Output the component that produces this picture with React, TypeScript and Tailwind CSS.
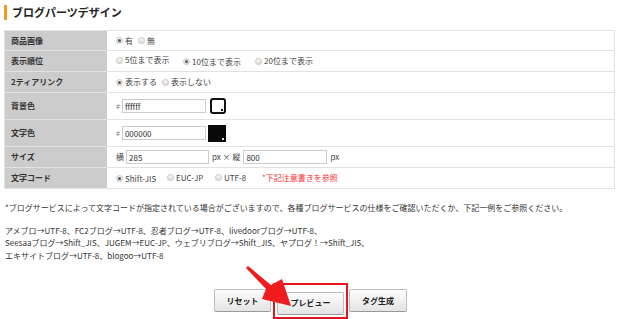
import React from "react";

const font = { fontFamily: '"Noto Sans CJK JP", "Noto Sans", sans-serif' };

function Radio({ on, label }: { on?: boolean; label: string }) {
  return (
    <span className="inline-flex items-center gap-[2px]">
      <span className="flex h-[7px] w-[7px] items-center justify-center rounded-full border border-[#c4c4c4] bg-gradient-to-b from-[#fafafa] to-[#dedede]">
        {on && <span className="h-[3px] w-[3px] rounded-full bg-[#555]" />}
      </span>
      <span>{label}</span>
    </span>
  );
}

function Row({ label, h, children }: { label: string; h: string; children: React.ReactNode }) {
  return (
    <div className={`flex ${h} border-b border-[#e2e2e2]`}>
      <div className="flex w-[103px] shrink-0 items-center border-r border-white bg-[#cccccc] pl-[6px] text-[8px] font-bold text-[#333]">
        {label}
      </div>
      <div className="flex flex-1 items-center pl-[8px] text-[8px] text-[#444]">{children}</div>
    </div>
  );
}

function Btn({ children, w }: { children: React.ReactNode; w: string }) {
  return (
    <button className={`h-[23px] ${w} rounded-[2px] border border-[#bdbdbd] border-b-[#999] bg-gradient-to-b from-[#fdfdfd] to-[#e4e4e4] text-[8px] font-bold text-[#222]`}>
      {children}
    </button>
  );
}

export default function App() {
  return (
    <div className="relative h-[319px] w-[620px] overflow-hidden bg-white text-[#333]" style={font}>
      <div className="flex h-[23px] items-center pt-[1px]">
        <div className="ml-[4px] h-[15px] w-[3px] bg-[#f39a1e]" />
        <h1 className="ml-[5px] text-[11px] font-bold text-[#222]">ブログパーツデザイン</h1>
      </div>

      <div className="ml-[4px] mt-[7px] w-[611px] border border-b-0 border-[#e2e2e2]">
        <Row label="商品画像" h="h-[20px]">
          <div className="flex gap-[5px]">
            <Radio on label="有" />
            <Radio label="無" />
          </div>
        </Row>
        <Row label="表示順位" h="h-[21px]">
          <div className="flex">
            <div className="w-[67px]"><Radio label="5位まで表示" /></div>
            <div className="w-[72px]"><Radio on label="10位まで表示" /></div>
            <Radio label="20位まで表示" />
          </div>
        </Row>
        <Row label="2ティアリンク" h="h-[21px]">
          <div className="flex gap-[5px]">
            <Radio on label="表示する" />
            <Radio label="表示しない" />
          </div>
        </Row>
        <Row label="背景色" h="h-[27px]">
          <span className="mr-[2px] text-[7px] text-[#777]">#</span>
          <input
            readOnly
            value="ffffff"
            className="h-[14px] w-[84px] border border-[#ccc] px-[2px] text-[8px] text-[#333] outline-none"
          />
          <span className="ml-[4px] flex h-[16px] w-[16px] items-end justify-end rounded-[3px] border-[2px] border-[#111] bg-white p-[1px]">
            <span className="h-[2px] w-[2px] bg-[#111]" />
          </span>
        </Row>
        <Row label="文字色" h="h-[27px]">
          <span className="mr-[2px] text-[7px] text-[#777]">#</span>
          <input
            readOnly
            value="000000"
            className="h-[14px] w-[84px] border border-[#ccc] px-[2px] text-[8px] text-[#333] outline-none"
          />
          <span className="ml-[2px] flex h-[17px] w-[18px] items-end justify-end bg-[#0a0a0a] p-[2px]">
            <span className="h-[2px] w-[2px] bg-[#ddd]" />
          </span>
        </Row>
        <Row label="サイズ" h="h-[21px]">
          <span className="mr-[2px]">横</span>
          <input
            readOnly
            value="285"
            className="h-[14px] w-[83px] border border-[#ccc] px-[2px] text-[8px] text-[#333] outline-none"
          />
          <span className="mx-[3px]">px × 縦</span>
          <input
            readOnly
            value="800"
            className="h-[14px] w-[84px] border border-[#ccc] px-[2px] text-[8px] text-[#333] outline-none"
          />
          <span className="ml-[3px]">px</span>
        </Row>
        <Row label="文字コード" h="h-[21px]">
          <div className="flex items-center">
            <div className="w-[51px]"><Radio on label="Shift-JIS" /></div>
            <div className="w-[48px]"><Radio label="EUC-JP" /></div>
            <div className="w-[47px]"><Radio label="UTF-8" /></div>
            <span className="text-[#f33]">*下記注意書きを参照</span>
          </div>
        </Row>
      </div>

      <div className="ml-[5px] mt-[13px] text-[8px] leading-[12.5px] text-[#333]">
        <p>*ブログサービスによって文字コードが指定されている場合がございますので、各種ブログサービスの仕様をご確認いただくか、下記一例をご参照ください。</p>
        <p className="mt-[10px]">
          アメブロ→UTF-8、FC2ブログ→UTF-8、忍者ブログ→UTF-8、livedoorブログ→UTF-8、
          <br />
          Seesaaブログ→Shift_JIS、JUGEM→EUC-JP、ウェブリブログ→Shift_JIS、ヤプログ！→Shift_JIS、
          <br />
          エキサイトブログ→UTF-8、blogoo→UTF-8
        </p>
      </div>

      <div className="mt-[21px] flex items-center justify-center gap-[1px] pl-[1px]">
        <Btn w="w-[57px]">リセット</Btn>
        <div className="ml-[1px] border-[2px] border-[#e8141b] p-[2px]">
          <Btn w="w-[67px]">プレビュー</Btn>
        </div>
        <Btn w="w-[58px]">タグ生成</Btn>
      </div>

      <svg className="pointer-events-none absolute left-0 top-0" width="620" height="319">
        <polygon
          points="246,268 266,289 262,299 291,306 282,279 271,285 248,266"
          fill="#ee1c1c"
        />
      </svg>
    </div>
  );
}
